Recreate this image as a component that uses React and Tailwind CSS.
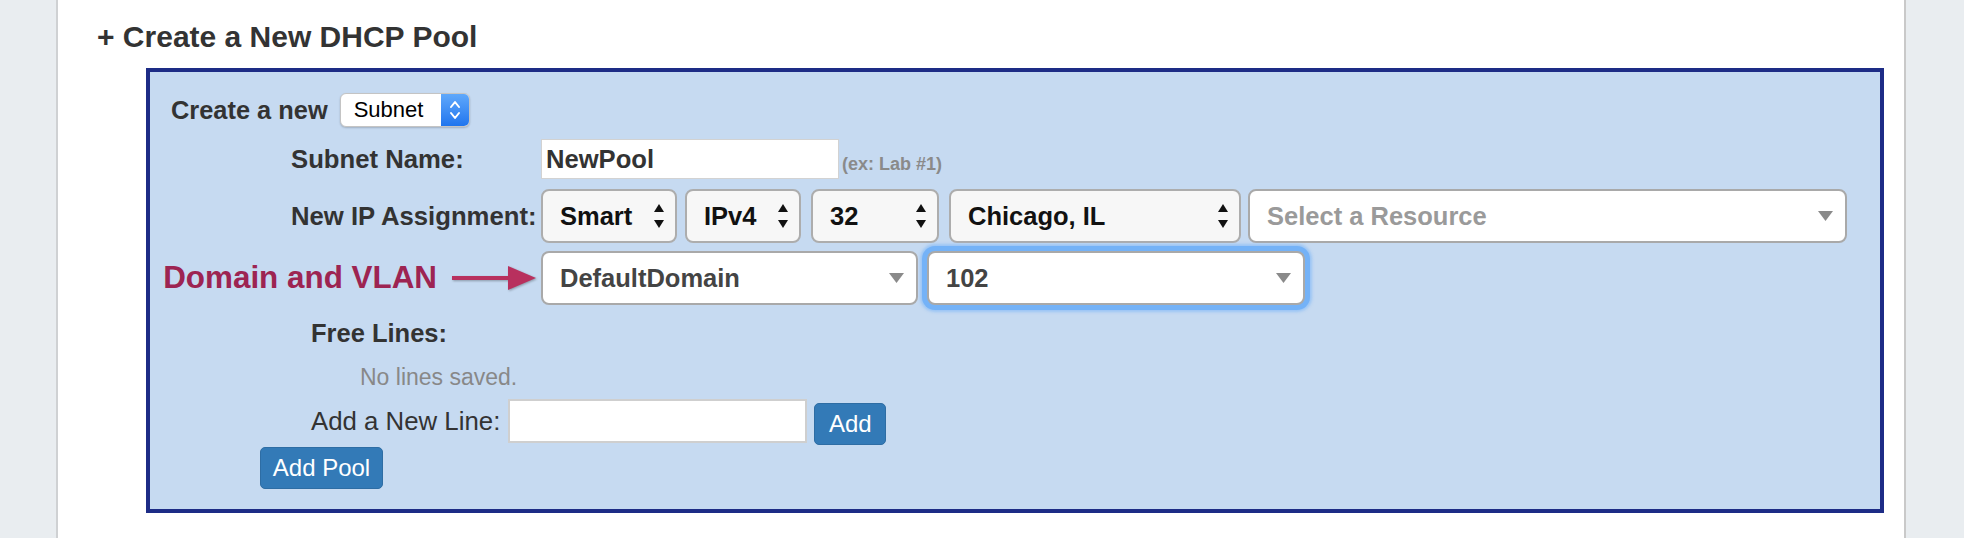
import React from 'react';

const font = { fontFamily: '"Liberation Sans", Arial, Helvetica, sans-serif' };

function UpDown() {
  return (
    <svg width="10" height="24" viewBox="0 0 10 24" className="shrink-0">
      <polygon points="0,8 5,0 10,8" fill="#111" />
      <polygon points="0,16 10,16 5,24" fill="#111" />
    </svg>
  );
}

function Caret() {
  return (
    <svg width="15" height="10" viewBox="0 0 15 10" className="shrink-0">
      <polygon points="0,0 15,0 7.5,10" fill="#8a8a8a" />
    </svg>
  );
}

// native-looking grey select with up/down arrows
function MacSelect({ label, width, className = '' }) {
  return (
    <div
      className={`flex h-[54px] shrink-0 items-center justify-between rounded-[8px] border-2 border-[#adadad] bg-[#f7f7f7] pl-[17px] pr-[11px] text-[25.5px] font-bold text-[#111] ${width} ${className}`}
    >
      <span>{label}</span>
      <UpDown />
    </div>
  );
}

// chosen-style white dropdown
function DropSelect({ label, width, muted = false, focused = false, className = '' }) {
  return (
    <div
      className={`flex h-[54px] shrink-0 items-center justify-between rounded-[8px] border-2 border-[#a9a9a9] bg-white pl-[17px] pr-[12px] text-[25.5px] font-bold ${
        muted ? 'text-[#9a9a9a]' : 'text-[#444]'
      } ${focused ? 'shadow-[0_0_0_5px_#74b2f7,0_0_3px_7px_rgba(116,178,247,0.55)]' : ''} ${width} ${className}`}
    >
      <span>{label}</span>
      <Caret />
    </div>
  );
}

export default function App() {
  return (
    <div className="flex h-[538px] w-full bg-white" style={font}>
      {/* left gutter */}
      <div className="w-[58px] shrink-0 border-r-2 border-[#cfd1d3] bg-[#e9edf0]" />

      {/* main column */}
      <div className="min-w-0 flex-1 pt-[19px]">
        <h2 className="pl-[39px] text-[30px] font-bold leading-[36px] text-[#333]">+ Create a New DHCP Pool</h2>

        <div className="ml-[88px] mr-[20px] mt-[13px] border-4 border-[#1d2c86] bg-[#c6daf1] pb-[20px] pl-[13px] pt-[21px] text-[#333]">
          {/* Create a new */}
          <div className="flex h-[34px] items-center pl-[8px]">
            <span className="text-[25.4px] font-bold">Create a new</span>
            <div className="ml-[12px] flex h-[34px] w-[130px] overflow-hidden rounded-[6px] border border-[#c4c4c4] bg-white shadow-[0_1px_2px_rgba(0,0,0,0.2)]">
              <span className="flex-1 pl-[13px] text-[22px] leading-[32px] text-black">Subnet</span>
              <div className="flex w-[28px] items-center justify-center bg-gradient-to-b from-[#5fa8fb] to-[#1f75ee]">
                <svg width="12" height="22" viewBox="0 0 12 22" fill="none" stroke="white" strokeWidth="2" strokeLinecap="round" strokeLinejoin="round">
                  <polyline points="2,8 6,3 10,8" />
                  <polyline points="2,14 6,19 10,14" />
                </svg>
              </div>
            </div>
          </div>

          {/* Subnet Name */}
          <div className="mt-[12px] flex h-[40px] items-center">
            <div className="w-[378px] shrink-0 pl-[128px] text-[25.7px] font-bold">Subnet Name:</div>
            <div className="flex h-[40px] w-[298px] items-center border border-[#d2d2d2] bg-white pl-[4px] text-[25.6px] font-bold">
              NewPool
            </div>
            <span className="ml-[3px] mt-[10px] text-[18px] font-bold text-[#8a8a8a]">(ex: Lab #1)</span>
          </div>

          {/* New IP Assignment */}
          <div className="mt-[10px] flex h-[54px] items-center">
            <div className="w-[378px] shrink-0 pl-[128px] text-[25.7px] font-bold">New IP Assignment:</div>
            <MacSelect label="Smart" width="w-[136px]" />
            <MacSelect label="IPv4" width="w-[116px]" className="ml-[8px]" />
            <MacSelect label="32" width="w-[128px]" className="ml-[10px]" />
            <MacSelect label="Chicago, IL" width="w-[292px]" className="ml-[10px]" />
            <DropSelect label="Select a Resource" width="w-[599px]" muted className="ml-[7px]" />
          </div>

          {/* Domain and VLAN */}
          <div className="mt-[8px] flex h-[54px] items-center">
            <div className="flex w-[378px] shrink-0 items-center justify-end pr-[5px]">
              <span className="whitespace-nowrap text-[31.4px] font-bold text-[#9d2452]">Domain and VLAN</span>
              <svg width="84" height="26" viewBox="0 0 84 26" className="ml-[15px] shrink-0 drop-shadow-[1px_1px_1px_rgba(0,0,0,0.3)]">
                <line x1="0" y1="13" x2="60" y2="13" stroke="#b8305e" strokeWidth="4" />
                <polygon points="56,1 84,13 56,25" fill="#b8305e" />
              </svg>
            </div>
            <DropSelect label="DefaultDomain" width="w-[377px]" />
            <DropSelect label="102" width="w-[378px]" focused className="ml-[9px]" />
          </div>

          {/* Free lines */}
          <div className="mt-[12px] pl-[148px] text-[25.5px] font-bold leading-[32px]">Free Lines:</div>
          <div className="mt-[13px] pl-[197px] text-[23px] leading-[30px] text-[#888]">No lines saved.</div>

          <div className="mt-[7px] flex items-start pl-[148px]">
            <span className="text-[25.8px] leading-[44px]">Add a New Line:</span>
            <div className="ml-[8px] h-[44px] w-[299px] border-2 border-[#cfcfcf] bg-white" />
            <button className="ml-[7px] mt-[4px] h-[42px] w-[72px] rounded-[5px] border border-[#2e6da4] bg-[#337ab7] text-[24px] text-white">
              Add
            </button>
          </div>

          <button className="ml-[97px] mt-[2px] h-[42px] w-[123px] rounded-[5px] border border-[#2e6da4] bg-[#337ab7] text-[24px] text-white">
            Add Pool
          </button>
        </div>
      </div>

      {/* right gutter */}
      <div className="w-[60px] shrink-0 border-l-2 border-[#c9c9c9] bg-[#e9edf0]" />
    </div>
  );
}
